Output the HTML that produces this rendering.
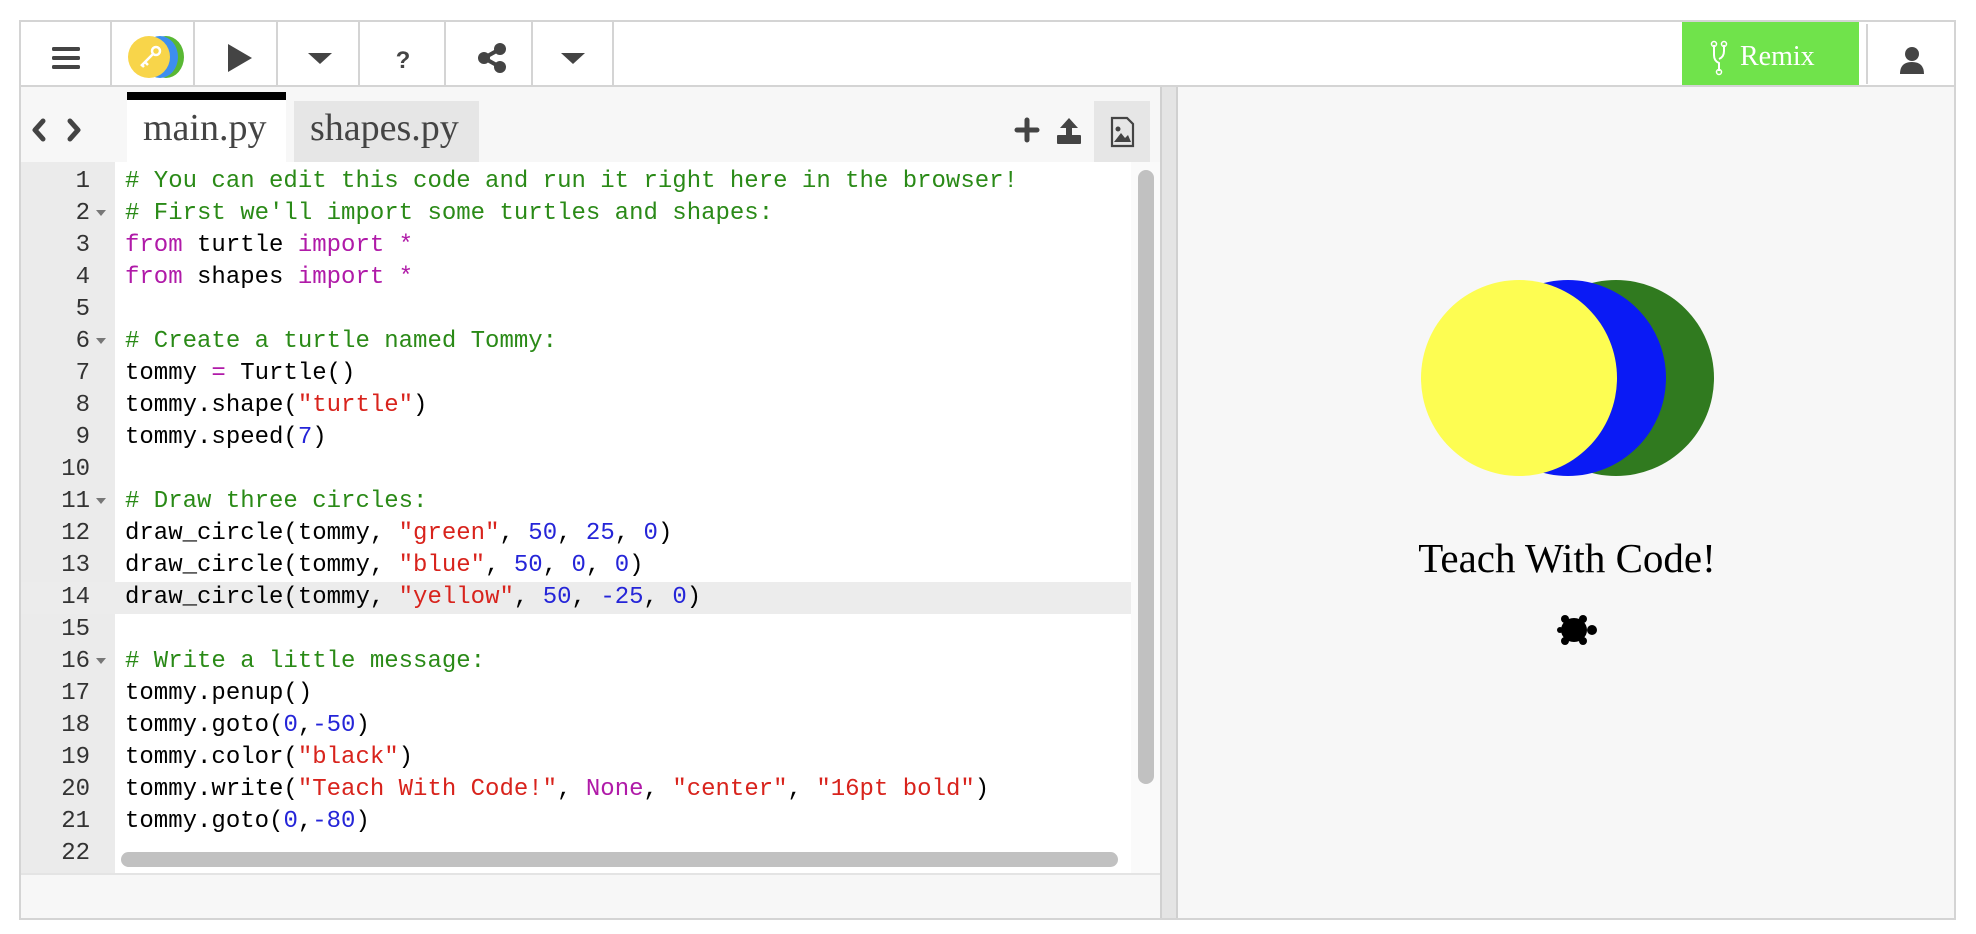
<!DOCTYPE html>
<html><head><meta charset="utf-8"><style>
*{box-sizing:border-box;margin:0;padding:0}
body{width:1976px;height:934px;background:#fff;position:relative;overflow:hidden;font-family:"Liberation Sans",sans-serif}
.abs{position:absolute}
#frame{left:19px;top:20px;width:1937px;height:900px;border:2px solid #d4d4d4;background:#fff}
.tb{top:20px;height:67px;border-right:2px solid #d4d4d4}
.ico{fill:#444}
#code{left:125px;top:166px;font-family:"Liberation Mono",monospace;font-size:24px;line-height:32px;white-space:pre;color:#000}
#nums{left:19px;top:166px;width:71px;text-align:right;font-family:"Liberation Mono",monospace;font-size:24px;line-height:32px;color:#333;white-space:pre}
.c{color:#2a8a17}.k{color:#b01aa8}.s{color:#d8231c}.n{color:#2525d8}
</style></head><body>
<div id="frame" class="abs"></div>
<div class="abs" style="left:19px;top:85px;width:1937px;height:2px;background:#d4d4d4"></div>
<div class="abs tb" style="left:19px;width:93px"></div>
<div class="abs tb" style="left:112px;width:83px"></div>
<div class="abs tb" style="left:195px;width:83px"></div>
<div class="abs tb" style="left:278px;width:82px"></div>
<div class="abs tb" style="left:360px;width:86px"></div>
<div class="abs tb" style="left:446px;width:87px"></div>
<div class="abs tb" style="left:533px;width:81px"></div>
<svg class="abs" style="left:0;top:0" width="1976" height="90">
<g class="ico">
<rect x="52" y="47" width="28" height="4" rx="1.5"/><rect x="52" y="56" width="28" height="4" rx="1.5"/><rect x="52" y="65" width="28" height="4" rx="1.5"/>
<polygon points="228,44 228,72 252,58"/>
<polygon points="308,53 332,53 320,64"/>
<polygon points="561,53 585,53 573,64"/>
<text x="403" y="68" font-family="Liberation Sans" font-weight="bold" font-size="24" text-anchor="middle" fill="#444">?</text>
<circle cx="484" cy="58" r="6"/><circle cx="500" cy="49" r="6"/><circle cx="500" cy="67" r="6"/>
<path d="M484 58 L500 49 M484 58 L500 67" stroke="#444" stroke-width="4"/>
</g>
<ellipse cx="166" cy="57" rx="18" ry="21" fill="#59b834"/>
<ellipse cx="160" cy="57" rx="18" ry="21" fill="#3d8ef0"/>
<circle cx="149" cy="57" r="21" fill="#f8d54a"/>
<g stroke="#fff" stroke-width="2.5" fill="none"><circle cx="156" cy="51" r="4"/><path d="M153 54 L141 66 M145 62 L148 65 M142 65 L144 67"/></g>
<rect x="1682" y="22" width="177" height="63" fill="#70e34b"/>
<path d="M1714 45 v10 q0 6 5 8 v8 M1724 45 v6 q0 6 -5 8" stroke="#fff" stroke-width="2" fill="none"/>
<circle cx="1714" cy="44" r="2.5" stroke="#fff" fill="none" stroke-width="1.5"/><circle cx="1724" cy="44" r="2.5" stroke="#fff" fill="none" stroke-width="1.5"/><circle cx="1719" cy="72" r="2.5" stroke="#fff" fill="none" stroke-width="1.5"/>
<text x="1740" y="65" font-family="Liberation Serif" font-size="28" fill="#fff">Remix</text>
<rect x="1866" y="24" width="2" height="60" fill="#d4d4d4"/>
<circle cx="1912" cy="54" r="7" fill="#444"/><path d="M1900 74 q0 -12 12 -12 q12 0 12 12 z" fill="#444"/>
</svg>
<div class="abs" style="left:21px;top:87px;width:1139px;height:75px;background:#f7f7f7"></div>
<div class="abs" style="left:127px;top:92px;width:159px;height:70px;background:#fff;border-top:8px solid #000"></div>
<div class="abs" style="left:294px;top:101px;width:185px;height:61px;background:#e6e6e6"></div>
<div class="abs" style="left:143px;top:106px;font-family:'Liberation Serif',serif;font-size:38px;color:#444">main.py</div>
<div class="abs" style="left:310px;top:106px;font-family:'Liberation Serif',serif;font-size:38px;color:#444">shapes.py</div>
<div class="abs" style="left:1094px;top:101px;width:56px;height:61px;background:#e6e6e6"></div>
<svg class="abs" style="left:0;top:87px" width="1170" height="80">
<path d="M43 34 L35 43 L43 52 M70 34 L78 43 L70 52" stroke="#444" stroke-width="5" fill="none" stroke-linecap="round" stroke-linejoin="round"/>
<path d="M1027 33 v20 M1017 43 h20" stroke="#444" stroke-width="5" stroke-linecap="round"/>
<polygon points="1069,31 1060,41 1066,41 1066,50 1072,50 1072,41 1078,41" fill="#444"/>
<rect x="1057" y="48" width="24" height="9" rx="1" fill="#444"/>
<path d="M1112 31 h15 l6 6 v22 h-21 z" stroke="#444" stroke-width="2.2" fill="none"/>
<circle cx="1118" cy="42" r="2.5" fill="#444"/><polygon points="1114,55 1121,46 1125,51 1128,48 1131,55" fill="#444"/>
</svg>
<div class="abs" style="left:21px;top:162px;width:94px;height:711px;background:#ebebeb"></div>
<div class="abs" style="left:21px;top:582px;width:1110px;height:32px;background:#ececec"></div>
<div class="abs" style="left:1131px;top:162px;width:29px;height:711px;background:#fafafa"></div>
<div class="abs" style="left:1138px;top:170px;width:16px;height:614px;background:#c1c1c1;border-radius:8px"></div>
<div id="nums" class="abs">1
2
3
4
5
6
7
8
9
10
11
12
13
14
15
16
17
18
19
20
21
22</div>
<div id="code" class="abs"><span class="c"># You can edit this code and run it right here in the browser!</span>
<span class="c"># First we'll import some turtles and shapes:</span>
<span class="k">from</span> turtle <span class="k">import</span> <span class="k">*</span>
<span class="k">from</span> shapes <span class="k">import</span> <span class="k">*</span>

<span class="c"># Create a turtle named Tommy:</span>
tommy <span class="k">=</span> Turtle()
tommy.shape(<span class="s">"turtle"</span>)
tommy.speed(<span class="n">7</span>)

<span class="c"># Draw three circles:</span>
draw_circle(tommy, <span class="s">"green"</span>, <span class="n">50</span>, <span class="n">25</span>, <span class="n">0</span>)
draw_circle(tommy, <span class="s">"blue"</span>, <span class="n">50</span>, <span class="n">0</span>, <span class="n">0</span>)
draw_circle(tommy, <span class="s">"yellow"</span>, <span class="n">50</span>, <span class="n">-25</span>, <span class="n">0</span>)

<span class="c"># Write a little message:</span>
tommy.penup()
tommy.goto(<span class="n">0</span>,<span class="n">-50</span>)
tommy.color(<span class="s">"black"</span>)
tommy.write(<span class="s">"Teach With Code!"</span>, <span class="k">None</span>, <span class="s">"center"</span>, <span class="s">"16pt bold"</span>)
tommy.goto(<span class="n">0</span>,<span class="n">-80</span>)
</div>
<svg class="abs" style="left:0;top:0" width="120" height="700">
<g fill="#777"><polygon points="96,210 106,210 101,216"/><polygon points="96,338 106,338 101,344"/><polygon points="96,498 106,498 101,504"/><polygon points="96,658 106,658 101,664"/></g>
</svg>
<div class="abs" style="left:115px;top:843px;width:1016px;height:30px;background:#fff"></div>
<div class="abs" style="left:121px;top:852px;width:997px;height:15px;background:#c1c1c1;border-radius:8px"></div>
<div class="abs" style="left:21px;top:873px;width:1139px;height:45px;background:#f7f7f7;border-top:2px solid #e4e4e4"></div>
<div class="abs" style="left:1160px;top:87px;width:18px;height:831px;background:#e4e4e4;border-left:2px solid #d0d0d0;border-right:2px solid #d0d0d0"></div>
<div class="abs" style="left:1178px;top:87px;width:776px;height:831px;background:#f7f7f7"></div>
<svg class="abs" style="left:1178px;top:87px" width="776" height="831">
<circle cx="438" cy="291" r="98" fill="#307a1f"/>
<circle cx="390" cy="291" r="98" fill="#0a1af5"/>
<circle cx="341" cy="291" r="98" fill="#fdfd52"/>
<text x="389" y="485" font-family="Liberation Serif" font-size="41" text-anchor="middle" fill="#000">Teach With Code!</text>
<g fill="#000"><ellipse cx="396" cy="543" rx="13" ry="12"/><circle cx="414" cy="543" r="5"/><circle cx="387" cy="532" r="4"/><circle cx="405" cy="532" r="4"/><circle cx="387" cy="554" r="4"/><circle cx="405" cy="554" r="4"/><circle cx="382" cy="543" r="3"/></g>
</svg>
</body></html>
